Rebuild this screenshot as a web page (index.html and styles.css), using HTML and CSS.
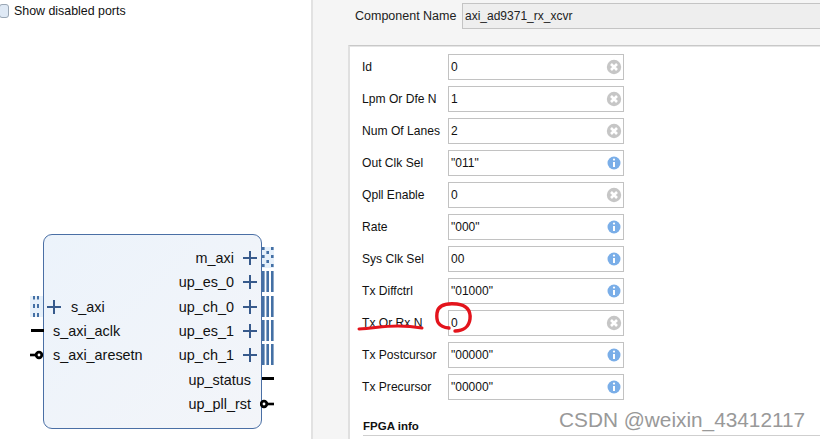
FILE: index.html
```html
<!DOCTYPE html>
<html lang="en">
<head>
<meta charset="utf-8">
<title>Customize IP</title>
<link rel="stylesheet" href="styles.css">
</head>
<body>
<svg class="defs" width="0" height="0" aria-hidden="true">
  <symbol id="plus" viewBox="0 0 14 14"><path d="M0 7H14M7 0V14" stroke="#375a8c" stroke-width="2" fill="none"/></symbol>
  <symbol id="bus" viewBox="0 0 12 21"><path d="M0 0h2.600v21H0zM4.400 0H7v21H4.400zM9 0h2.600v21H9z" fill="#4470a5"/></symbol>
  <symbol id="clear" viewBox="0 0 16 16"><circle cx="8" cy="8" r="7.200" fill="#c6c6c6"/><path d="M5 5l6 6M11 5l-6 6" stroke="#fff" stroke-width="2.600"/></symbol>
  <symbol id="info" viewBox="0 0 16 16"><circle cx="8" cy="8" r="6.500" fill="#7aaee8"/><circle cx="8" cy="4.600" r="1.100" fill="#fff"/><path d="M8 7v5" stroke="#fff" stroke-width="2"/></symbol>
</svg>
<div class="app">
  <section class="left">
    <label class="show"><span class="check"></span><span>Show disabled ports</span></label>
    <div class="block">
      <div class="col">
        <div class="row row-s"><svg class="pin-dots-l" width="13" height="21" viewBox="0 0 13 21"><rect width="13" height="21" fill="#e6f0fa"/><path d="M3 0h2v3.500H3zM7 0h2v3.500H7zM3 8h2v4H3zM7 8h2v4H7zM3 17h2v4H3zM7 17h2v4H7z" fill="#4470a5"/></svg><svg class="plus" width="14" height="14"><use href="#plus"/></svg><span class="name-s">s_axi</span></div>
        <div class="row"><i class="wire wire-l"></i><span>s_axi_aclk</span></div>
        <div class="row"><svg class="neg neg-l" width="13" height="10" viewBox="0 0 13 10"><path d="M0 5H6" stroke="#000" stroke-width="2.600"/><circle cx="9" cy="5" r="2.800" fill="#fff" stroke="#000" stroke-width="2.800"/></svg><span>s_axi_aresetn</span></div>
      </div>
      <div class="col col-r">
        <div class="row"><span>m_axi</span><svg class="plus" width="14" height="14"><use href="#plus"/></svg><svg class="pin-r" width="12" height="21" viewBox="0 0 12 21"><rect width="12" height="21" fill="#e6f0fa"/><path d="M0 0h2.600v3H0zM0 8h2.600v3H0zM0 17h2.600v3H0zM4.400 4h2.600v3H4.400zM4.400 13h2.600v3H4.400zM9 0h2.600v3H9zM9 8h2.600v3H9zM9 17h2.600v3H9z" fill="#4470a5"/></svg></div>
        <div class="row"><span>up_es_0</span><svg class="plus" width="14" height="14"><use href="#plus"/></svg><svg class="pin-r" width="12" height="21"><use href="#bus"/></svg></div>
        <div class="row"><span>up_ch_0</span><svg class="plus" width="14" height="14"><use href="#plus"/></svg><svg class="pin-r" width="12" height="21"><use href="#bus"/></svg></div>
        <div class="row"><span>up_es_1</span><svg class="plus" width="14" height="14"><use href="#plus"/></svg><svg class="pin-r" width="12" height="21"><use href="#bus"/></svg></div>
        <div class="row"><span>up_ch_1</span><svg class="plus" width="14" height="14"><use href="#plus"/></svg><svg class="pin-r" width="12" height="21"><use href="#bus"/></svg></div>
        <div class="row row-plain"><span>up_status</span><i class="wire wire-r"></i></div>
        <div class="row row-plain"><span>up_pll_rst</span><svg class="neg neg-r" width="14" height="10" viewBox="0 0 14 10"><path d="M7 5H14" stroke="#000" stroke-width="2.600"/><circle cx="4" cy="5" r="2.800" fill="#fff" stroke="#000" stroke-width="2.800"/></svg></div>
      </div>
    </div>
  </section>
  <section class="right">
    <div class="comp">
      <span class="comp-label">Component Name</span>
      <div class="comp-input">axi_ad9371_rx_xcvr</div>
    </div>
    <div class="panel">
      <div class="field"><span class="lab">Id</span><div class="inp"><span>0</span><svg width="16" height="16"><use href="#clear"/></svg></div></div>
      <div class="field"><span class="lab">Lpm Or Dfe N</span><div class="inp"><span>1</span><svg width="16" height="16"><use href="#clear"/></svg></div></div>
      <div class="field"><span class="lab">Num Of Lanes</span><div class="inp"><span>2</span><svg width="16" height="16"><use href="#clear"/></svg></div></div>
      <div class="field"><span class="lab">Out Clk Sel</span><div class="inp"><span>"011"</span><svg width="16" height="16"><use href="#info"/></svg></div></div>
      <div class="field"><span class="lab">Qpll Enable</span><div class="inp"><span>0</span><svg width="16" height="16"><use href="#clear"/></svg></div></div>
      <div class="field"><span class="lab">Rate</span><div class="inp"><span>"000"</span><svg width="16" height="16"><use href="#info"/></svg></div></div>
      <div class="field"><span class="lab">Sys Clk Sel</span><div class="inp"><span>00</span><svg width="16" height="16"><use href="#info"/></svg></div></div>
      <div class="field"><span class="lab">Tx Diffctrl</span><div class="inp"><span>"01000"</span><svg width="16" height="16"><use href="#info"/></svg></div></div>
      <div class="field"><span class="lab">Tx Or Rx N</span><div class="inp"><span>0</span><svg width="16" height="16"><use href="#clear"/></svg></div></div>
      <div class="field"><span class="lab">Tx Postcursor</span><div class="inp"><span>"00000"</span><svg width="16" height="16"><use href="#info"/></svg></div></div>
      <div class="field"><span class="lab">Tx Precursor</span><div class="inp"><span>"00000"</span><svg width="16" height="16"><use href="#info"/></svg></div></div>
      <div class="sect">FPGA info</div>
    </div>
  </section>
  <svg class="ink" width="820" height="439" viewBox="0 0 820 439" aria-hidden="true">
    <path d="M359 329C375 328 383 326 398 326C408 326 416 327 422 328" fill="none" stroke="#e3141c" stroke-width="3" stroke-linecap="round"/>
    <path d="M455 331C463 331 469 327 470 319C471 310 466 305 457 304C447 303 438 305 437 313C436 321 438 327 449 328" fill="none" stroke="#e3141c" stroke-width="3.400" stroke-linecap="round"/>
  </svg>
  <div class="mark">CSDN @weixin_43412117</div>
</div>
</body>
</html>
```
FILE: styles.css
```css
* { box-sizing: border-box; }
html, body { margin: 0; padding: 0; }
body { width: 820px; height: 439px; overflow: hidden; background: #fff; font-family: "Liberation Sans", Arial, sans-serif; color: #111; }
.defs { position: absolute; }
.app { position: relative; display: flex; width: 820px; height: 439px; overflow: hidden; }

.left { width: 311px; flex: none; background: #fff; padding-top: 4px; }
.show { display: flex; align-items: center; gap: 5px; margin-left: -1px; font-size: 12.400px; height: 14px; }
.check { width: 10px; height: 14px; border: 1px solid #9aa7b5; border-radius: 3px; background: #dfe9f5; }
.block { display: flex; justify-content: space-between; position: relative; width: 219px; height: 195px; margin: 216px 0 0 43px; padding: 11px 0 0 0; border: 1px solid #4a6fa5; border-radius: 9px; background: linear-gradient(135deg, #ecf3fb, #f3f5f9); font-size: 14.400px; color: #111; }
.col { padding-top: 48.600px; }
.col-r { padding-top: 0; padding-right: 4px; }
.row { position: relative; display: flex; align-items: center; height: 24.300px; white-space: nowrap; }
.col .row { padding-left: 9px; }
.col-r .row { justify-content: flex-end; gap: 9px; padding-left: 0; }
.col-r .row-plain { padding-right: 6px; }
.col .row-s { padding-left: 3px; }
.name-s { margin-left: 10px; }
.plus { flex: none; }
.pin-r { position: absolute; right: -16.500px; top: 1px; }
.pin-dots-l { position: absolute; left: -14px; top: 1px; }
.wire { position: absolute; display: block; height: 3px; background: #000; top: 10px; }
.wire-l { left: -13px; width: 13px; }
.wire-r { right: -17px; width: 12px; }
.neg { position: absolute; top: 7px; }
.neg-l { left: -14px; }
.neg-r { right: -17px; }

.right { flex: 1; min-width: 0; background: #f5f5f5; border-left: 2px solid #e2e2e2; padding-top: 3px; }
.comp { display: flex; align-items: center; height: 26px; padding-left: 42px; }
.comp-label { width: 107px; flex: none; font-size: 12.500px; color: #222; }
.comp-input { flex: 1; height: 26px; padding-left: 2px; line-height: 24px; font-size: 12px; background: #eee; border: 1px solid #c4c4c4; border-right: 0; color: #222; }
.panel { margin: 16px 0 0 35px; height: 394px; padding: 7px 0 0 12px; background: #fff; border-top: 1px solid #c8c8c8; border-left: 2px solid #e0e0e0; box-shadow: inset 0 1px 0 #e5e5e5; padding-top: 8px; }
.field { display: flex; align-items: center; height: 26px; margin-bottom: 6px; }
.lab { width: 86px; flex: none; font-size: 12.100px; color: #111; }
.inp { display: flex; align-items: center; justify-content: space-between; width: 176px; height: 26px; padding: 0 1px 0 2px; background: #fff; border: 1px solid #c2c2c2; font-size: 12px; color: #111; }
.sect { margin: 20px 0 0 1px; width: 460px; height: 16px; font-size: 11.500px; font-weight: 700; border-bottom: 1px solid #cfcfcf; }

.ink { position: absolute; left: 0; top: 0; pointer-events: none; }
.mark { position: absolute; left: 559px; top: 408px; font-size: 20.800px; color: #8e8e8e; white-space: nowrap; opacity: 0.9; }
```
